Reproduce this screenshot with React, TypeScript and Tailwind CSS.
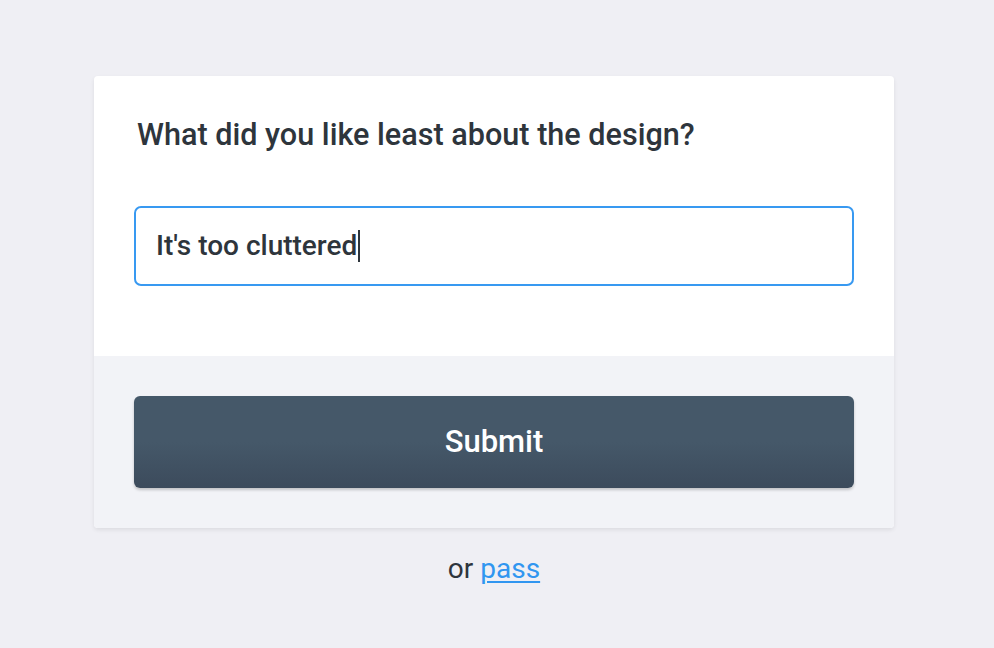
import React from "react";

export default function App() {
  return (
    <div
      className="min-h-[648px] w-full bg-[#efeff4] flex flex-col items-center pt-[76px] pr-[6px]"
      style={{ fontFamily: "Roboto, 'Noto Sans', sans-serif" }}
    >
      <div className="w-[800px] rounded-[4px] overflow-hidden bg-white shadow-[0_2px_4px_rgba(0,0,0,0.08)]">
        <div className="px-[40px] pt-[40px] pb-[70px]">
          <h1 className="pl-[3px] text-[30.6px] leading-[38px] font-medium text-[#2e353c]">
            What did you like least about the design?
          </h1>
          <div className="mt-[52px] h-[80px] rounded-[7px] border-2 border-[#3899f1] flex items-center pl-[20px]">
            <span className="text-[28px] text-[#2e353c] font-medium leading-none">
              It's too cluttered
            </span>
            <span className="ml-[1px] w-[1.5px] h-[32px] bg-[#2e353c]" />
          </div>
        </div>
        <div className="bg-[#f2f3f7] px-[40px] py-[40px]">
          <button className="w-full h-[92px] rounded-[6px] bg-gradient-to-b from-[#455869] from-50% to-[#3c4b5c] text-white text-[31px] font-medium shadow-[0_2px_3px_rgba(0,0,0,0.2)]">
            Submit
          </button>
        </div>
      </div>
      <div className="mt-[23px] text-[28px] leading-[36px] text-[#2e353c]">
        or <a href="#" className="text-[#3096f0] underline underline-offset-[3px] decoration-[1.5px]">pass</a>
      </div>
    </div>
  );
}
